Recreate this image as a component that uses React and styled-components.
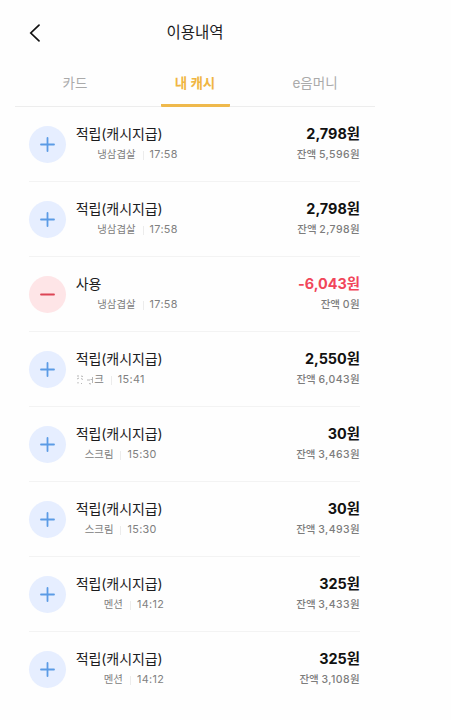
import React from "react";
import styled, { createGlobalStyle } from "styled-components";

const GlobalStyle = createGlobalStyle`
  * {
    box-sizing: border-box;
  }
  body {
    margin: 0;
    background: #fefefe;
    font-family: Inter, "Noto Sans CJK KR", sans-serif;
    color: #1c1c1e;
  }
`;

const Screen = styled.main`
  width: 360px;
  height: 720px;
  margin-left: 15px;
  overflow: hidden;
`;

const Header = styled.header`
  display: grid;
  grid-template-columns: 40px 1fr 40px;
  align-items: center;
  height: 64px;
  padding-top: 1px;
`;

const BackButton = styled.button`
  display: flex;
  padding: 0 0 0 14px;
  border: 0;
  background: none;
`;

const Title = styled.h1`
  margin: 0;
  padding-top: 1px;
  font-size: 15.5px;
  line-height: 20px;
  font-weight: 400;
  text-align: center;
`;

const Tabs = styled.nav`
  display: grid;
  grid-template-columns: 120px 120px 120px;
  justify-items: center;
  height: 43px;
  border-bottom: 1px solid #ededed;
`;

const Tab = styled.a`
  width: 69px;
  height: 43px;
  padding-top: 9px;
  border-bottom: 3px solid ${(props) => (props.$active ? "#efb94c" : "transparent")};
  border-radius: 1px;
  color: ${(props) => (props.$active ? "#f0b642" : "#aaaaaa")};
  font-size: 13.5px;
  font-weight: ${(props) => (props.$active ? 700 : 400)};
  line-height: 20px;
  text-align: center;
  white-space: nowrap;
`;

const List = styled.ul`
  margin: 0;
  padding: 0 15px 0 14px;
  list-style: none;
`;

const Row = styled.li`
  display: flex;
  height: 75px;
  padding-top: 18px;
  border-bottom: 1px solid #f3f3f3;

  &:last-child {
    border-bottom: 0;
  }
`;

const Badge = styled.div`
  display: flex;
  align-items: center;
  justify-content: center;
  width: 37px;
  height: 37px;
  margin: 0.5px 9.5px 0 0.3px;
  border-radius: 50%;
  background: ${(props) => (props.$spent ? "#fee5e7" : "#e6eeff")};
  color: ${(props) => (props.$spent ? "#dc4455" : "#5b9be5")};
`;

const Info = styled.div`
  flex: 1;
`;

const Kind = styled.div`
  font-size: 14px;
  line-height: 18px;
  letter-spacing: -0.1px;
`;

const Detail = styled.div`
  display: flex;
  align-items: center;
  height: 14px;
  margin-top: 5px;
  padding-left: ${(props) => props.$indent}px;
  color: #808080;
  font-size: 10.4px;
  line-height: 14px;
`;

const Separator = styled.span`
  width: 1px;
  height: 9px;
  margin: 0 6px 0 7px;
  background: #ececec;
`;

const Time = styled.span`
  font-size: 10.8px;
  letter-spacing: 0.35px;
`;

const Figures = styled.div`
  text-align: right;
  white-space: nowrap;
`;

const Amount = styled.div`
  color: ${(props) => (props.$spent ? "#f1465a" : "#111111")};
  font-size: 14.4px;
  font-weight: 700;
  line-height: 18px;
`;

const Balance = styled.div`
  margin-top: 5px;
  color: #7c7c7c;
  font-size: 10.5px;
  font-weight: 500;
  line-height: 14px;
`;

const Won = styled.span`
  letter-spacing: 0.4px;
`;

const FadedMark = styled.svg`
  width: 18px;
  height: 12px;
`;

const tabs = ["카드", "내 캐시", "e음머니"];

const entries = [
  { store: "냉삼겹살", indent: 21.5, time: "17:58", amount: "2,798원", balance: "5,596원" },
  { store: "냉삼겹살", indent: 21.5, time: "17:58", amount: "2,798원", balance: "2,798원" },
  { store: "냉삼겹살", indent: 21.5, time: "17:58", amount: "-6,043원", balance: "0원", spent: true },
  { store: "크", indent: 0.5, time: "15:41", amount: "2,550원", balance: "6,043원", faded: true },
  { store: "스크림", indent: 9, time: "15:30", amount: "30원", balance: "3,463원" },
  { store: "스크림", indent: 9, time: "15:30", amount: "30원", balance: "3,493원" },
  { store: "멘션", indent: 28, time: "14:12", amount: "325원", balance: "3,433원" },
  { store: "멘션", indent: 28, time: "14:12", amount: "325원", balance: "3,108원" },
];

const Sign = ({ spent }) => (
  <svg width="15" height="15" viewBox="0 0 15 15" fill="none" stroke="currentColor" strokeWidth="1.8" strokeLinecap="round">
    <path d={spent ? "M1 7.5h13" : "M1 7.5h13M7.5 1v13"} />
  </svg>
);

const Entry = ({ entry }) => (
  <Row>
    <Badge $spent={entry.spent}>
      <Sign spent={entry.spent} />
    </Badge>
    <Info>
      <Kind>{entry.spent ? "사용" : "적립(캐시지급)"}</Kind>
      <Detail $indent={entry.indent}>
        {entry.faded && (
          <FadedMark viewBox="0 0 18 12" fill="none" stroke="#a5a5a5" strokeWidth="0.8">
            <path d="M1 2h2M5 2l2 .5M1 5l2-1M5 4.500l2 1M2 8v1.500M5 9.500h1M11 6h3M16.500 3v6M14.500 5.500h2M13 9.500l2 .5" />
          </FadedMark>
        )}
        {entry.store}
        <Separator />
        <Time>{entry.time}</Time>
      </Detail>
    </Info>
    <Figures>
      <Amount $spent={entry.spent}>{entry.amount}</Amount>
      <Balance>
        잔액 <Won>{entry.balance}</Won>
      </Balance>
    </Figures>
  </Row>
);

const App = () => {
  return (
    <>
      <GlobalStyle />
      <Screen>
        <Header>
          <BackButton aria-label="뒤로">
            <svg width="12" height="18" viewBox="0 0 12 18" fill="none" stroke="#111" strokeWidth="1.7" strokeLinecap="round">
              <path d="M10 1.200L1.800 9L10 16.800" />
            </svg>
          </BackButton>
          <Title>이용내역</Title>
        </Header>
        <Tabs>
          {tabs.map((name, i) => (
            <Tab key={name} $active={i === 1}>
              {name}
            </Tab>
          ))}
        </Tabs>
        <List>
          {entries.map((entry, i) => (
            <Entry key={i} entry={entry} />
          ))}
        </List>
      </Screen>
    </>
  );
};

export default App;
